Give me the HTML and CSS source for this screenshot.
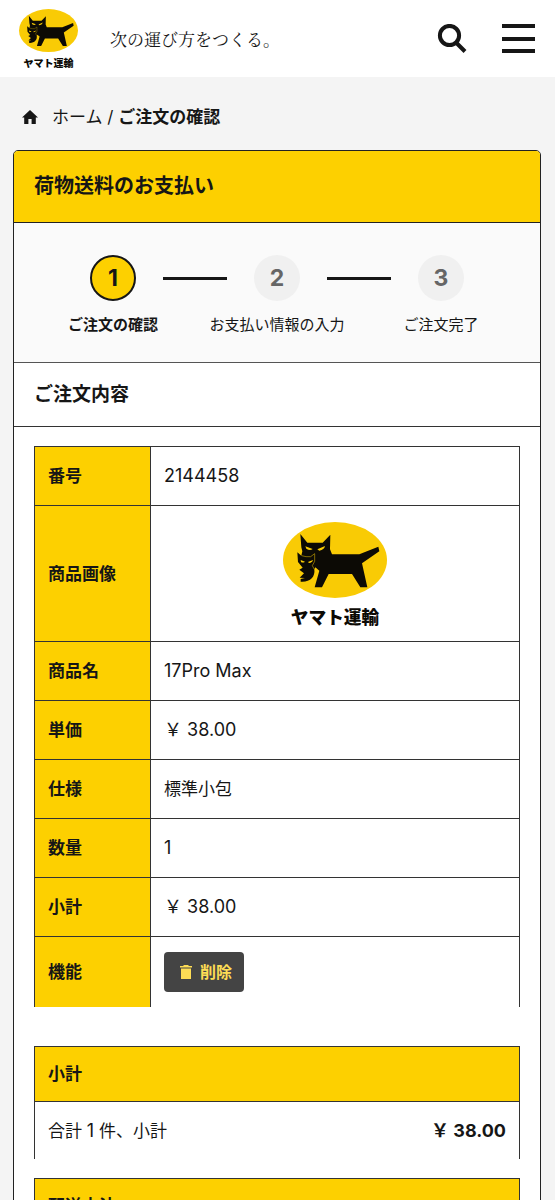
FILE: index.html
```html
<!DOCTYPE html>
<html lang="ja">
<head>
<meta charset="utf-8">
<meta name="viewport" content="width=device-width, initial-scale=1">
<title>ご注文の確認</title>
<link rel="stylesheet" href="styles.css">
</head>
<body>
<header class="site-header">
  <a class="brand" href="#" aria-label="ヤマト運輸">
    <svg class="brand-logo" viewBox="39 36 312 312" aria-hidden="true">
      <g id="logo">
        <ellipse cx="195" cy="150" rx="156" ry="114" fill="#f9cb05"/>
        <path fill="#0c0a05" d="M91 72L112 98H158L181 74L180 118L186 133H268L325 110L328 124L276 160L292 232H271L246 192H176L156 232H134L148 182L136 172L133 178C136 202 120 217 92 215V207L105 204L89 203L102 190L88 179L98 173L84 156L82 127L94 137L97 124L94 112Z"/>
        <path fill="none" stroke="#f9cb05" stroke-width="1.5" d="M95 137L108 140L122 140L134 131V154L127 167L133 178"/>
        <path fill="#f9cb05" d="M106 109L128 117Q120 124 109 116ZM142 118L165 108Q163 119 148 122ZM92 150L105 155Q99 160 93 156ZM114 156L129 150Q127 158 117 159Z"/>
      </g>
      <text x="195" y="341" text-anchor="middle" class="logo-text">ヤマト運輸</text>
    </svg>
  </a>
  <p class="tagline">次の運び方をつくる。</p>
  <button class="icon-button" type="button" aria-label="検索">
    <svg width="30" height="30" viewBox="0 0 30 30" fill="none" stroke="#161616" stroke-width="4"><circle cx="12.5" cy="11.5" r="9.6"/><path d="M18.5 18L28 27.5"/></svg>
  </button>
  <button class="icon-button" type="button" aria-label="メニュー">
    <svg width="33" height="30" viewBox="0 0 33 30" fill="#161616"><path d="M0 0h33v4H0zM0 13h33v4H0zM0 25h33v4H0z"/></svg>
  </button>
</header>

<nav class="breadcrumb" aria-label="パンくず">
  <svg class="home-icon" viewBox="0 0 16 14" aria-hidden="true"><path fill="#161616" d="M8 0L0 7.4h2.2V14h4.2V9h3.2v5h4.2V7.4H16z"/></svg>
  <p><a href="#">ホーム</a> / <strong>ご注文の確認</strong></p>
</nav>

<main class="card">
  <h1 class="card-title">荷物送料のお支払い</h1>
  <ol class="steps">
    <li class="step current"><div class="step-row"><span class="step-number">1</span></div><div>ご注文の確認</div></li>
    <li class="step"><div class="step-row"><span class="step-number">2</span></div><div>お支払い情報の入力</div></li>
    <li class="step"><div class="step-row"><span class="step-number">3</span></div><div>ご注文完了</div></li>
  </ol>
  <h2 class="section-title">ご注文内容</h2>
  <div class="content">
    <table class="items">
      <tr><th scope="row">番号</th><td class="value">2144458</td></tr>
      <tr class="picture"><th scope="row">商品画像</th><td>
        <svg class="item-logo" viewBox="39 36 312 312" role="img" aria-label="ヤマト運輸"><use href="#logo"/><text x="195" y="341" text-anchor="middle" class="logo-text">ヤマト運輸</text></svg>
      </td></tr>
      <tr><th scope="row">商品名</th><td class="value">17Pro Max</td></tr>
      <tr><th scope="row">単価</th><td class="value">￥ 38.00</td></tr>
      <tr><th scope="row">仕様</th><td>標準小包</td></tr>
      <tr><th scope="row">数量</th><td class="value">1</td></tr>
      <tr><th scope="row">小計</th><td class="value">￥ 38.00</td></tr>
      <tr class="actions"><th scope="row">機能</th><td>
        <button class="delete" type="button"><svg width="12" height="14" viewBox="0 0 12 14" aria-hidden="true"><path fill="currentColor" d="M3.5 0h5v1H12v1.6H0V1h3.5zM1 3.6h10V14H1z"/></svg>削除</button>
      </td></tr>
    </table>
    <section class="panel">
      <h3>小計</h3>
      <p class="panel-row"><span>合計 <span class="value">1</span> 件、小計</span><strong class="value">￥ 38.00</strong></p>
    </section>
    <section class="panel">
      <h3>配送方法</h3>
    </section>
  </div>
</main>
</body>
</html>
```
FILE: styles.css
```css
* { box-sizing: border-box; }

body {
  margin: 0;
  background: #f4f4f4;
  color: #161616;
  font: 17px/24px Inter, "Noto Sans CJK JP", sans-serif;
}

h1, h2, h3, p, ol { margin: 0; padding: 0; }
a { color: inherit; text-decoration: none; }
button { font: inherit; border: 0; cursor: pointer; }
.logo-text { font: 900 53px "Noto Sans CJK JP", sans-serif; fill: #0c0a05; }
.value { font-size: 18px; }

.site-header {
  display: flex;
  align-items: center;
  height: 77px;
  padding: 0 20px 0 19px;
  background: #fff;
}
.brand { display: flex; }
.brand-logo { width: 59px; height: 59px; }
.tagline {
  flex: 1;
  padding-left: 32px;
  font-family: "Noto Serif CJK JP", "Noto Sans CJK JP", serif;
  white-space: nowrap;
}
.icon-button { display: flex; padding: 0; background: none; }
.icon-button + .icon-button { margin-left: 35px; }

.breadcrumb {
  display: flex;
  align-items: center;
  gap: 14px;
  padding: 28px 22px 21px;
}
.home-icon { width: 16px; height: 14px; }

.card {
  margin: 0 14px 40px 13px;
  border: 1px solid #222;
  border-radius: 5px;
  background: #fff;
  overflow: hidden;
}
.card-title {
  padding: 23px 20px 24px;
  background: #fdd000;
  border-bottom: 1px solid #222;
  font-size: 20px;
  line-height: 24px;
}

.steps {
  display: grid;
  grid-template-columns: repeat(3, 1fr);
  padding: 32px 17px 26px;
  background: #fafafa;
  border-bottom: 1px solid #555;
  list-style: none;
}
.step {
  display: flex;
  flex-direction: column;
  gap: 13px;
  font-size: 15px;
  line-height: 22px;
  text-align: center;
  white-space: nowrap;
}
.step-row { display: flex; align-items: center; gap: 27px; }
.step-row::before, .step-row::after { content: ""; flex: 1; height: 3px; background: #161616; }
.step:first-child .step-row::before, .step:last-child .step-row::after { background: none; }
.step-number {
  width: 46px;
  height: 46px;
  border-radius: 50%;
  background: #f0f0f0;
  color: #666;
  font-size: 23px;
  font-weight: 700;
  line-height: 46px;
}
.current { font-weight: 700; }
.current .step-number {
  border: 2px solid #161616;
  background: #fdd000;
  color: #161616;
  line-height: 42px;
}

.section-title {
  padding: 20px;
  border-bottom: 1px solid #333;
  font-size: 19px;
  line-height: 23px;
}
.content { padding: 19px 20px 40px; }

.items { width: 100%; border-collapse: collapse; }
.items th, .items td {
  padding: 17px 13px;
  border: 1px solid #333;
  text-align: left;
}
.items th { width: 116px; background: #fdd000; white-space: nowrap; }
.items .picture td { padding: 16px 13px 15px; text-align: center; }
.item-logo { display: block; width: 104px; height: 104px; margin: 0 auto; }
.items .actions th, .items .actions td { padding: 15px 13px; border-bottom: 0; }

.delete {
  display: flex;
  align-items: center;
  gap: 8px;
  height: 40px;
  padding: 0 12px 0 16px;
  border-radius: 4px;
  background: #444;
  color: #fddc55;
  font-size: 16px;
  font-weight: 700;
}

.panel { margin-top: 39px; border: 1px solid #333; border-bottom: 0; }
.panel + .panel { margin-top: 19px; }
.panel h3 {
  padding: 15px 13px;
  background: #fdd000;
  border-bottom: 1px solid #333;
  font-size: 17px;
}
.panel-row { display: flex; justify-content: space-between; padding: 17px 13px 16px; }
```
